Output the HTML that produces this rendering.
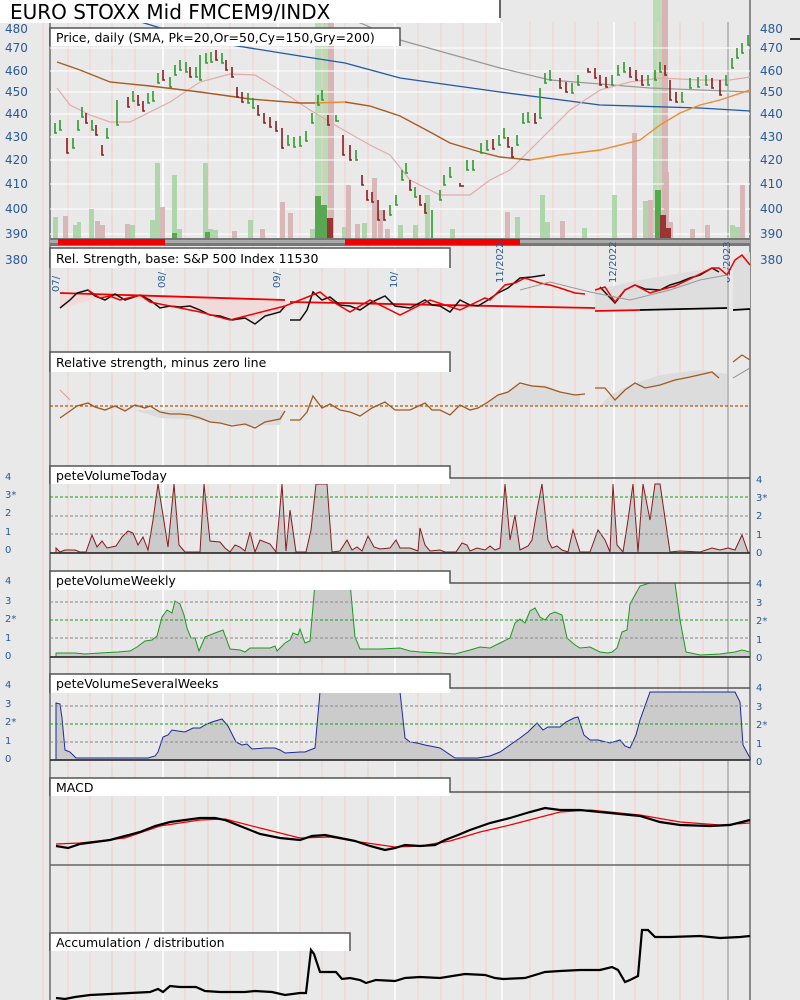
<!DOCTYPE html>
<html><head><meta charset="utf-8"><style>
html,body{margin:0;padding:0;background:#e9e9e9;}
svg{display:block;font-family:"DejaVu Sans","Liberation Sans",sans-serif;}
</style></head><body>
<svg width="800" height="1000" viewBox="0 0 800 1000" xmlns="http://www.w3.org/2000/svg">
<rect width="800" height="1000" fill="#e9e9e9"/>
<rect x="315" y="0" width="13" height="240" fill="#b9dcb6"/>
<rect x="328" y="0" width="6" height="240" fill="#d9b4b4"/>
<rect x="653" y="0" width="9" height="240" fill="#b9dcb6"/>
<rect x="662" y="0" width="6" height="240" fill="#d9b4b4"/>
<g stroke="#f6cccc" stroke-width="1">
<path d="M43 0V1000M68 22V1000M90 22V1000M112 22V1000M135 22V1000M185 22V1000M208 22V1000M230 22V1000M253 22V1000M300 22V1000M322 22V1000M345 22V1000M368 22V1000M418 22V1000M441 22V1000M463 22V1000M486 22V1000M530 22V1000M553 22V1000M575 22V1000M598 22V1000M635 22V1000M658 22V1000M680 22V1000M703 22V1000"/>
</g>
<g stroke="#ffffff" stroke-width="1.5">
<path d="M163 22V1000M278 22V1000M395 22V1000M502 22V1000M614 22V1000"/>
</g>
<path d="M728 22V1000" stroke="#bcbcbc" stroke-width="2"/>
<path d="M50 22V1000M750 0V1000" stroke="#8a8a8a" stroke-width="2"/>
<g stroke="#ffffff" stroke-width="1">
<path d="M50 48H750M50 71H750M50 92H750M50 114H750M50 137H750M50 160H750M50 184H750M50 209H750M50 234H750"/>
</g>
<g fill="#a9d5a4" opacity="0.9">
<rect x="53" y="217" width="5" height="21"/><rect x="73" y="225" width="5" height="13"/><rect x="77" y="222" width="4" height="16"/><rect x="89" y="209" width="5" height="29"/><rect x="130" y="225" width="5" height="13"/><rect x="155" y="163" width="5" height="75"/><rect x="150" y="220" width="5" height="18"/><rect x="172" y="175" width="5" height="63"/><rect x="177" y="229" width="5" height="9"/><rect x="203" y="163" width="5" height="75"/><rect x="208" y="229" width="5" height="9"/><rect x="213" y="230" width="5" height="8"/><rect x="248" y="220" width="5" height="18"/><rect x="310" y="229" width="5" height="9"/><rect x="342" y="227" width="5" height="11"/><rect x="362" y="223" width="5" height="15"/><rect x="398" y="225" width="5" height="13"/><rect x="413" y="225" width="5" height="13"/><rect x="425" y="195" width="5" height="43"/><rect x="450" y="229" width="5" height="9"/><rect x="515" y="217" width="5" height="21"/><rect x="540" y="195" width="5" height="43"/><rect x="545" y="222" width="5" height="16"/><rect x="582" y="228" width="5" height="10"/><rect x="612" y="195" width="5" height="43"/><rect x="643" y="201" width="5" height="37"/><rect x="730" y="225" width="5" height="13"/><rect x="735" y="227" width="5" height="11"/></g>
<g fill="#d6b2b2" opacity="0.9">
<rect x="63" y="216" width="5" height="22"/><rect x="95" y="221" width="5" height="17"/><rect x="100" y="225" width="5" height="13"/><rect x="125" y="224" width="5" height="14"/><rect x="160" y="207" width="5" height="31"/><rect x="232" y="231" width="5" height="7"/><rect x="260" y="229" width="5" height="9"/><rect x="280" y="202" width="5" height="36"/><rect x="288" y="213" width="5" height="25"/><rect x="346" y="185" width="5" height="53"/><rect x="355" y="224" width="5" height="14"/><rect x="372" y="178" width="5" height="60"/><rect x="378" y="210" width="5" height="28"/><rect x="385" y="229" width="5" height="9"/><rect x="505" y="212" width="5" height="26"/><rect x="560" y="221" width="5" height="17"/><rect x="632" y="133" width="5" height="105"/><rect x="648" y="200" width="5" height="38"/><rect x="664" y="172" width="5" height="66"/><rect x="668" y="222" width="5" height="16"/><rect x="690" y="229" width="5" height="9"/><rect x="705" y="225" width="5" height="13"/><rect x="740" y="185" width="5" height="53"/></g>
<g fill="#58a852"><rect x="315" y="196" width="6" height="42"/><rect x="321" y="205" width="6" height="33"/><rect x="655" y="190" width="6" height="48"/><rect x="205" y="232" width="5" height="6"/><rect x="172" y="233" width="5" height="5"/></g>
<g fill="#9b3535"><rect x="327" y="218" width="6" height="20"/><rect x="660" y="215" width="6" height="23"/><rect x="666" y="228" width="5" height="10"/></g>
<polyline fill="none" stroke="#999" stroke-width="1.2" points="230,0 330,10 400,40 450,54 500,68 550,80 600,84 650,88 700,90 750,92"/>
<polyline fill="none" stroke="#2058a8" stroke-width="1.3" points="62,-2 200,40 300,56 345,63 400,78 500,92 600,105 700,108 750,111"/>
<polyline fill="none" stroke="#e4aaaa" stroke-width="1.2" points="57,88 70,105 90,115 110,122 130,122 150,112 170,102 200,82 230,74 255,75 280,90 310,110 340,128 370,145 390,155 410,180 440,195 470,195 490,180 510,170 540,140 570,110 600,90 630,82 660,78 700,80 730,80 750,77"/>
<polyline fill="none" stroke="#a85a20" stroke-width="1.4" points="57,62 80,70 110,82 150,86 200,92 250,99 300,103 315,103"/>
<polyline fill="none" stroke="#f08a30" stroke-width="1.4" points="315,103 345,102"/>
<polyline fill="none" stroke="#a85a20" stroke-width="1.4" points="345,102 370,106 400,116 430,132 450,143 480,152 500,157 530,160"/>
<polyline fill="none" stroke="#f08a30" stroke-width="1.4" points="530,160 560,155 600,150 640,140 660,125 680,113 700,105 720,100 735,95 750,90"/>
<path fill="none" stroke="#2a9a2a" stroke-width="1.6" d="M55 123v10h2M60 120v10h2M73 138v10h2M78 120v10h2M82 107v10h2M92 120v10h2M107 128v10h2M117 100v25h2M133 91v10h2M148 93v10h2M153 91v10h2M158 73v10h2M170 77v10h2M175 65v10h2M180 60v10h2M186 62v10h2M196 67v10h2M200 55v25h2M206 53v10h2M211 52v10h2M222 53v10h2M248 93v10h2M253 98v10h2M288 135v10h2M294 137v10h2M300 136v10h2M306 131v10h2M312 113v10h2M318 95v10h2M322 90v10h2M336 115v6h3M356 150v10h2M390 205v10h2M396 195v10h2M402 170v10h2M406 163v10h2M415 187v10h2M432 210v30h2M440 190v10h2M444 175v10h2M450 167v10h2M467 160v10h2M473 160v10h2M481 143v10h2M487 140v10h2M499 135v10h2M504 128v10h2M517 135v10h2M523 113v10h2M528 112v10h2M540 88v30h2M545 73v10h2M550 70v10h2M572 83v10h2M578 75v10h2M612 75v10h2M618 65v10h2M624 62v10h2M648 75v10h2M655 70v10h2M660 62v10h2M682 92v10h2M690 78v10h2M698 77v10h2M706 75v10h2M726 75v10h2M732 58v10h2M737 48v10h2M742 43v10h2M748 35v10h2"/>
<path fill="none" stroke="#8a1a1a" stroke-width="1.6" d="M67 138v15h2M86 113v10h2M96 125v10h2M102 145v10h2M128 97v10h2M138 95v10h2M143 101v10h2M163 70v10h2M190 67v10h2M216 50v10h2M226 60v10h2M232 67v10h2M237 87v10h2M242 92v10h2M258 105v10h2M264 113v10h2M270 117v10h2M276 121v10h2M282 128v20h2M328 115v10h2M343 135v20h2M350 145v15h2M362 175v10h2M367 190v10h2M372 192v10h2M378 200v20h2M384 210v10h2M410 180v10h2M420 195v10h2M425 203v10h2M460 183v3h4M493 139v10h2M508 137v10h2M512 147v10h2M535 113v10h2M560 78v10h2M566 82v10h2M588 68v4h3M595 68v10h2M600 75v10h2M606 77v10h2M630 67v10h2M636 70v10h2M642 75v10h2M665 65v10h2M670 80v20h2M676 92v10h2M712 78v10h2M720 80v15h2"/>
<rect x="50" y="238" width="700" height="8" fill="#777"/>
<rect x="50" y="240" width="700" height="3" fill="#aaa"/>
<rect x="58" y="239" width="107" height="6" fill="#f00000"/>
<rect x="345" y="239" width="175" height="6" fill="#f00000"/>
<rect x="0" y="0" width="500" height="23" fill="#fff"/>
<path d="M500 0V18" stroke="#666" stroke-width="2"/>
<text x="10" y="19" font-size="20" fill="#000">EURO STOXX Mid FMCEM9/INDX</text>
<rect x="50" y="28" width="350" height="18" fill="#fff"/>
<path d="M50 46V28H400V46" fill="none" stroke="#555" stroke-width="1.5"/>
<text x="56" y="42" font-size="12.5">Price, daily (SMA, Pk=20,Or=50,Cy=150,Gry=200)</text>
<path d="M790 39h10" stroke="#333" stroke-width="2"/>
<g font-size="12" fill="#2a5a9a">
<text x="5" y="33">480</text><text x="5" y="52">470</text><text x="5" y="75">460</text><text x="5" y="96">450</text><text x="5" y="118">440</text><text x="5" y="141">430</text><text x="5" y="164">420</text><text x="5" y="188">410</text><text x="5" y="213">400</text><text x="5" y="238">390</text><text x="5" y="264">380</text>
<text x="760" y="33">480</text><text x="760" y="52">470</text><text x="760" y="75">460</text><text x="760" y="96">450</text><text x="760" y="118">440</text><text x="760" y="141">430</text><text x="760" y="164">420</text><text x="760" y="188">410</text><text x="760" y="213">400</text><text x="760" y="238">390</text><text x="760" y="264">380</text>
</g>
<rect x="50" y="248" width="400" height="20" fill="#fff"/>
<path d="M50 268V248H450V268" fill="none" stroke="#555" stroke-width="1.5"/>
<text x="56" y="263" font-size="12.5">Rel. Strength, base: S&amp;P 500 Index 11530</text>
<g font-size="10" fill="#2a5a9a">
<text transform="translate(59,292) rotate(-90)">07/</text>
<text transform="translate(165,288) rotate(-90)">08/</text>
<text transform="translate(280,288) rotate(-90)">09/</text>
<text transform="translate(397,288) rotate(-90)">10/</text>
<text transform="translate(503,283) rotate(-90)">11/2022</text>
<text transform="translate(616,283) rotate(-90)">12/2022</text>
<text transform="translate(730,283) rotate(-90)">01/2023</text>
</g>
<polygon fill="#f0dada" points="60,293 285,300 285,310 250,320 200,312 150,300 100,298 60,308"/>
<polygon fill="#dedede" points="595,290 640,280 700,270 727,268 727,310 595,310"/>
<polygon fill="#dedede" points="733,260 750,252 750,310 733,310"/>
<path d="M60 293L285 300M290 302L595 308M595 311L640 310" stroke="#f00000" stroke-width="1.8" fill="none"/>
<path d="M640 310L727 308M733 310L750 309" stroke="#000" stroke-width="1.8"/>
<polyline fill="none" stroke="#111" stroke-width="1.5" points="60,308 70,300 77,293 88,290 95,296 105,300 115,294 125,300 140,295 150,300 160,308 170,306 180,307 190,306 200,310 210,315 220,316 232,320 245,318 255,324 265,316 280,312 285,306"/>
<polyline fill="none" stroke="#111" stroke-width="1.5" points="290,320 300,320 307,310 313,292 322,300 330,297 340,305 350,306 360,310 372,302 385,296 395,306 410,308 425,300 432,305 440,306 450,312 460,300 470,305 478,306 488,300 498,293 508,288 520,278 532,277 545,275"/>
<polyline fill="none" stroke="#f00000" stroke-width="1.5" points="88,290 100,298 110,296 120,300 140,295 150,302 170,306 200,312 230,320 285,306 320,292 330,300 350,312 370,300 400,315 430,300 460,310 485,298 490,300 505,285 515,283 525,278 540,283 550,285 560,288 575,293 585,294"/>
<polyline fill="none" stroke="#111" stroke-width="1.5" points="600,287 615,303 625,290 635,285 645,289 660,290 670,285 680,282 690,278 700,275 712,268 719,272"/>
<polyline fill="none" stroke="#f00000" stroke-width="1.5" points="595,290 605,287 615,302 625,290 635,285 650,293 660,290 675,286 690,279 712,268 719,268 727,275 735,260 742,255 750,265"/>
<polyline fill="none" stroke="#999" stroke-width="1" points="520,290 550,282 590,292 630,300 670,290 700,280 727,275"/>
<rect x="50" y="352" width="400" height="20" fill="#fff"/>
<path d="M50 372V352H450V372" fill="none" stroke="#555" stroke-width="1.5"/>
<text x="56" y="367" font-size="12.5">Relative strength, minus zero line</text>
<polygon fill="#dcdcdc" points="480,406 500,395 520,385 545,385 565,393 580,395 580,406"/>
<polygon fill="#dcdcdc" points="600,406 610,395 630,385 660,375 700,370 727,374 727,406"/>
<polygon fill="#dcdcdc" points="120,406 160,418 200,420 240,425 280,425 285,410 120,410"/>
<path d="M50 406H750" stroke="#b05a10" stroke-width="1.3" stroke-dasharray="3,2"/>
<polyline fill="none" stroke="#e89a8a" stroke-width="1" points="60,390 70,400"/>
<polyline fill="none" stroke="#a05a20" stroke-width="1.3" points="60,418 70,411 77,406 88,403 95,407 105,410 115,406 125,411 135,405 145,408 150,406 160,412 170,414 180,414 190,415 200,418 210,422 220,423 232,426 245,424 255,428 265,422 280,419 285,411"/>
<polyline fill="none" stroke="#a05a20" stroke-width="1.3" points="290,420 300,420 307,412 313,396 322,408 330,404 340,410 350,412 360,416 372,408 385,402 395,410 410,410 425,403 432,410 440,410 450,415 460,405 470,410 478,408 488,402 498,395 508,392 520,383 532,386 545,387 560,392 575,395 585,394"/>
<polyline fill="none" stroke="#a05a20" stroke-width="1.3" points="595,388 605,388 615,400 625,390 635,383 645,388 660,385 675,380 690,377 712,372 719,378"/>
<polyline fill="none" stroke="#a05a20" stroke-width="1.3" points="733,362 742,355 750,360"/>
<polyline fill="none" stroke="#888" stroke-width="1" points="733,378 750,368"/>
<g font-size="10" fill="#2a5a9a">
<text x="5" y="480">4</text><text x="5" y="498">3*</text><text x="5" y="516">2</text><text x="5" y="535">1</text><text x="5" y="553">0</text>
<text x="756" y="483">4</text><text x="756" y="501">3*</text><text x="756" y="519">2</text><text x="756" y="538">1</text><text x="756" y="556">0</text>
<text x="5" y="584">4</text><text x="5" y="604">3</text><text x="5" y="622">2*</text><text x="5" y="641">1</text><text x="5" y="659">0</text>
<text x="756" y="587">4</text><text x="756" y="606">3</text><text x="756" y="624">2*</text><text x="756" y="643">1</text><text x="756" y="661">0</text>
<text x="5" y="688">4</text><text x="5" y="707">3</text><text x="5" y="725">2*</text><text x="5" y="744">1</text><text x="5" y="762">0</text>
<text x="756" y="691">4</text><text x="756" y="710">3</text><text x="756" y="728">2*</text><text x="756" y="747">1</text><text x="756" y="765">0</text>
</g>
<polygon fill="#cbcbcb" stroke="#8a1a1a" stroke-width="1" points="56,548 60,552 65,550 75,550 80,552 86,552 92,535 97,547 102,541 107,548 116,546 122,537 128,531 133,533 138,545 143,537 148,550 153,520 158,484 163,515 168,547 174,484 179,545 185,552 200,552 204,484 210,541 220,542 225,548 230,552 235,545 240,547 245,551 250,532 255,552 260,540 270,544 276,552 282,484 286,551 290,510 296,552 306,552 311,530 316,484 327,484 332,552 340,551 347,540 352,550 357,547 362,551 368,536 374,547 380,549 390,548 396,540 400,548 410,548 418,551 420,528 425,545 430,551 440,550 445,552 456,552 462,543 467,545 470,551 477,548 485,550 490,546 495,550 500,548 505,484 510,540 515,515 520,550 528,546 532,540 537,510 542,484 548,540 552,548 557,546 562,550 568,552 573,530 580,552 590,552 598,530 605,540 610,552 613,484 617,545 623,552 628,520 633,484 638,552 643,484 650,520 655,484 660,484 670,552 680,551 700,552 712,548 720,550 728,548 735,550 742,535 748,552 750,553 56,553"/>
<path d="M50 497H750" stroke="#18a018" stroke-dasharray="3,2"/>
<path d="M50 516H750M50 534H750" stroke="#888" stroke-dasharray="3,2"/>
<path d="M50 553H750" stroke="#333" stroke-width="1.8"/>
<rect x="50" y="466" width="400" height="18" fill="#fff"/>
<path d="M50 484V466H450V478H750" fill="none" stroke="#555" stroke-width="1.5"/>
<text x="56" y="480" font-size="12.5">peteVolumeToday</text>
<polygon fill="#cbcbcb" stroke="#1a9a1a" stroke-width="1" points="56,653 75,653 85,654 100,653 118,652 130,651 137,647 145,641 152,640 157,636 162,617 167,610 172,613 175,601 180,604 184,615 187,628 191,638 195,638 199,651 205,637 215,633 223,630 230,649 240,650 245,652 250,648 270,648 275,646 277,651 285,643 290,640 293,633 298,635 300,629 305,643 310,641 315,583 350,583 355,637 360,649 380,649 400,648 410,651 420,652 440,653 455,654 470,650 480,647 490,648 500,643 510,638 515,623 520,619 525,623 530,611 535,608 540,617 545,620 550,614 555,612 562,615 567,638 575,645 580,648 590,647 600,652 608,653 612,652 617,648 622,632 627,630 630,604 640,586 650,583 675,583 680,620 686,652 700,655 720,654 735,652 742,650 750,652 750,657 56,657"/>
<path d="M50 620H750" stroke="#18a018" stroke-dasharray="3,2"/>
<path d="M50 602H750M50 638H750" stroke="#888" stroke-dasharray="3,2"/>
<path d="M50 657H750" stroke="#333" stroke-width="1.8"/>
<rect x="50" y="571" width="400" height="19" fill="#fff"/>
<path d="M50 590V571H450V583H750" fill="none" stroke="#555" stroke-width="1.5"/>
<text x="56" y="585" font-size="12.5">peteVolumeWeekly</text>
<polygon fill="#cbcbcb" stroke="#1a2a9a" stroke-width="1" points="56,703 60,704 62,718 65,750 70,752 76,758 100,758 148,758 155,756 158,752 163,737 168,735 172,730 178,731 185,732 193,728 200,728 205,725 212,722 222,719 228,726 236,742 242,745 247,744 252,749 265,748 275,748 280,750 285,753 300,752 305,752 315,748 320,692 400,692 405,738 410,742 417,743 425,745 440,748 455,758 478,758 490,756 500,752 510,745 520,738 528,732 533,727 537,723 543,730 548,727 553,727 560,727 566,722 574,718 578,717 584,735 590,740 598,740 610,743 620,740 625,746 630,748 636,735 640,720 650,692 735,692 740,702 743,745 750,758 750,760 56,760"/>
<path d="M50 724H750" stroke="#18a018" stroke-dasharray="3,2"/>
<path d="M50 706H750M50 742H750" stroke="#888" stroke-dasharray="3,2"/>
<path d="M50 760H750" stroke="#333" stroke-width="1.8"/>
<rect x="50" y="674" width="400" height="19" fill="#fff"/>
<path d="M50 693V674H450V688H750" fill="none" stroke="#555" stroke-width="1.5"/>
<text x="56" y="688" font-size="12.5">peteVolumeSeveralWeeks</text>
<rect x="50" y="778" width="400" height="18" fill="#fff"/>
<path d="M50 796V778H450V792H750" fill="none" stroke="#555" stroke-width="1.5"/>
<text x="56" y="792" font-size="12.5">MACD</text>
<path d="M50 865H750" stroke="#666" stroke-width="1.5"/>
<polyline fill="none" stroke="#f00000" stroke-width="1.2" points="56,844 80,843 125,838 160,826 200,820 225,819 260,828 300,838 330,837 360,842 395,847 420,846 450,841 480,832 510,825 560,812 590,810 640,815 680,822 720,825 750,823"/>
<polyline fill="none" stroke="#000" stroke-width="2.2" points="56,846 68,848 80,844 95,842 110,840 125,836 140,832 155,826 170,822 185,820 200,818 215,818 225,820 240,826 260,834 280,838 300,840 312,836 325,835 340,838 355,841 370,846 385,850 395,848 405,845 420,846 435,845 445,840 458,835 470,830 490,823 510,818 530,812 545,808 560,810 580,810 600,812 620,814 640,816 660,822 680,825 710,826 730,825 750,820"/>
<rect x="50" y="933" width="300" height="18" fill="#fff"/>
<path d="M50 951V933H350V951" fill="none" stroke="#555" stroke-width="1.5"/>
<text x="56" y="947" font-size="12.5">Accumulation / distribution</text>
<polyline fill="none" stroke="#000" stroke-width="2.2" points="56,998 65,999 75,997 90,995 110,994 130,993 150,992 158,989 163,992 170,986 180,987 196,987 205,991 220,992 245,992 255,991 272,992 285,995 300,993 306,993 311,950 314,954 320,972 336,972 342,979 350,978 360,980 366,983 376,980 395,981 405,978 420,977 440,978 465,974 485,975 495,978 503,979 525,978 545,972 560,971 580,970 600,970 612,967 618,970 625,982 630,980 638,976 642,930 648,930 655,937 670,937 700,936 720,938 740,937 750,936"/>
</svg>
</body></html>
